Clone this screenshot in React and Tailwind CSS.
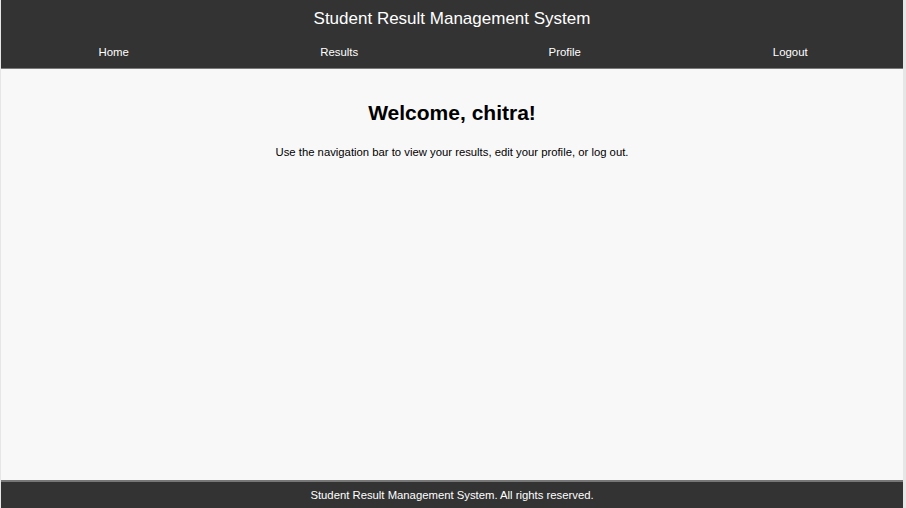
import React from 'react';

const links = ['Home', 'Results', 'Profile', 'Logout'];

export default function App() {
  return (
    <div className="h-screen flex flex-col bg-[#f8f8f8] font-['Liberation_Sans',Arial,sans-serif] border-l border-r-[3px] border-[#e6e6e6]">
      {/* Header */}
      <header className="bg-[#333333] text-white border-b border-[#7a7a7a]">
        <h1 className="text-center text-[17px] leading-[20px] pt-[9px]">Student Result Management System</h1>
        <nav className="flex pt-[16px] pb-[9px]">
          {links.map((l) => (
            <a key={l} href="#" className="flex-1 text-center text-[11.4px] leading-[14px]">
              {l}
            </a>
          ))}
        </nav>
      </header>

      {/* Main */}
      <main className="flex-1 text-center text-black">
        <h2 className="font-bold text-[21px] leading-[24px] mt-[32px]">Welcome, chitra!</h2>
        <p className="text-[11.3px] leading-[14px] mt-[20px]">
          Use the navigation bar to view your results, edit your profile, or log out.
        </p>
      </main>

      {/* Footer */}
      <footer className="bg-[#333333] text-white border-t-2 border-[#777777] text-center text-[11.3px] leading-[14px] pt-[6px] pb-[6px]">
        Student Result Management System. All rights reserved.
      </footer>
    </div>
  );
}
